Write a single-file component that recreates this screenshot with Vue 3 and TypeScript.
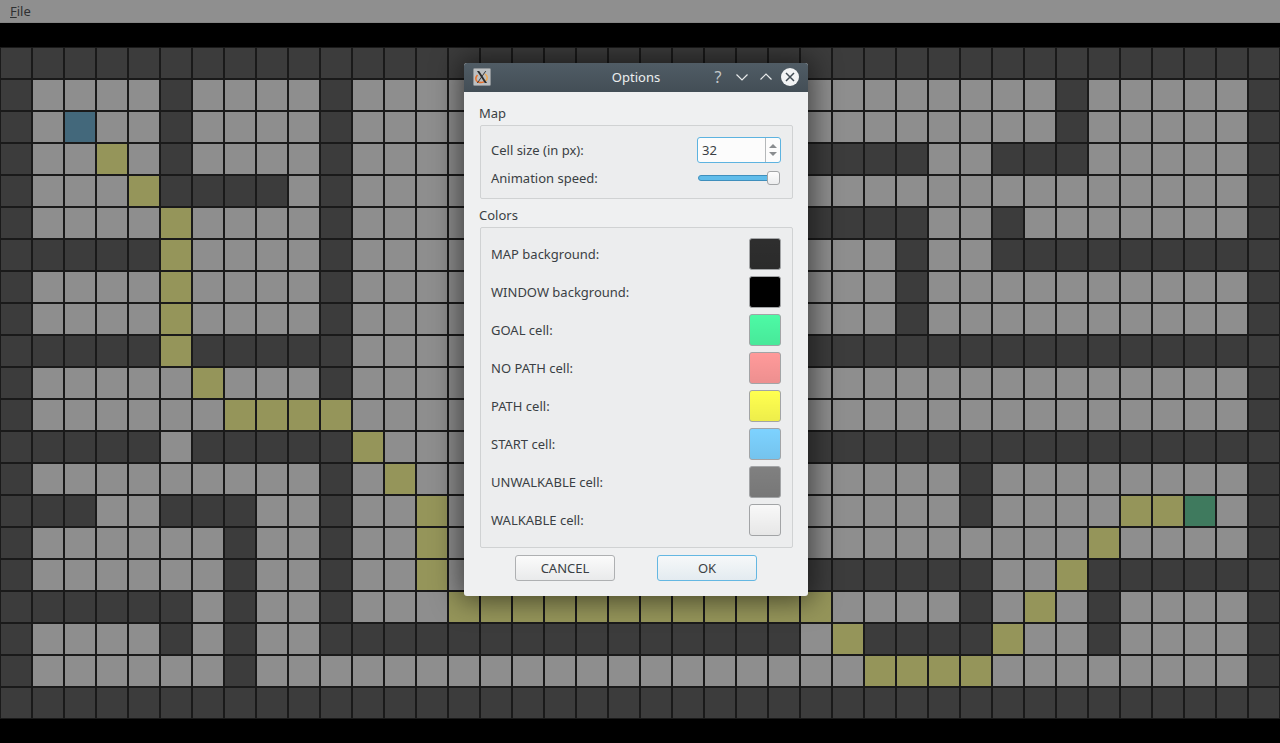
<script setup lang="ts">
import { computed } from 'vue';

const rows: string[] = [
  '##########' + '##########' + '##########' + '##########',
  '#....#....' + '#.........' + '..........' + '...#.....#',
  '#.s..#....' + '#.........' + '..........' + '...#.....#',
  '#..y.#....' + '#.........' + '.....####.' + '.###.....#',
  '#...y####.' + '#.........' + '..........' + '.........#',
  '#....y....' + '#.........' + '.....####.' + '.#.......#',
  '#####y....' + '#.........' + '........#.' + '.#########',
  '#....y....' + '#.........' + '........#.' + '.........#',
  '#....y....' + '#.........' + '........#.' + '.........#',
  '#####y####' + '#.........' + '.....#####' + '##########',
  '#.....y...' + '#.........' + '..........' + '.........#',
  '#......yyy' + 'y.........' + '..........' + '.........#',
  '#####.####' + '#y........' + '.....#####' + '##########',
  '#.........' + '#.y.......' + '..........' + '#........#',
  '###..###..' + '#..y......' + '..........' + '#....yyg.#',
  '#......#..' + '#..y......' + '..........' + '....y....#',
  '#......#..' + '#..y......' + '.....#####' + '#..y######',
  '######.#..' + '#...yyyyyy' + 'yyyyyy....' + '#.y.#....#',
  '#....#.#..' + '##########' + '#####.y###' + '#y..#....#',
  '#......#..' + '..........' + '.......yyy' + 'y........#',
  '##########' + '##########' + '##########' + '##########',
];

const kinds: Record<string, string> = {
  '#': 'wall',
  '.': 'free',
  y: 'path',
  s: 'start',
  g: 'goal',
};

const cells = computed(() => rows.join('').split('').map((c) => kinds[c]));

const colors = [
  { label: 'MAP background:', color: '#2e2e2e' },
  { label: 'WINDOW background:', color: '#000000' },
  { label: 'GOAL cell:', color: '#4dfaa5' },
  { label: 'NO PATH cell:', color: '#ff9a9a' },
  { label: 'PATH cell:', color: '#ffff50' },
  { label: 'START cell:', color: '#7dd2ff' },
  { label: 'UNWALKABLE cell:', color: '#808080' },
  { label: 'WALKABLE cell:', color: '#f8f8f8' },
];
</script>

<template>
  <div class="app">
    <div class="menubar"><span class="menu-item"><u>F</u>ile</span></div>
    <div class="map">
      <div v-for="(kind, i) in cells" :key="i" class="cell" :class="kind"></div>
    </div>

    <div class="dialog">
      <div class="titlebar">
        <svg class="app-icon" width="18" height="18" viewBox="0 0 18 18">
          <rect x="0.5" y="0.5" width="17" height="17" rx="1" fill="#bcbfc1" stroke="#8d9296" />
          <path d="M4.500 7C2 9.500 2.300 13 5 14C7.500 14.800 10.500 14.500 12.500 13" fill="none" stroke="#e8702a" stroke-width="1.500" />
          <path d="M12 6C14.800 8 15 11 12.500 13" fill="none" stroke="#f0a850" stroke-width="1.500" />
          <path d="M4 3h2.200l7.800 12h-2.200z" fill="#2c2c2c" />
          <path d="M13.200 3L4.800 15H3.900L12.300 3z" fill="#2c2c2c" />
        </svg>
        <span class="title">Options</span>
        <div class="title-buttons">
          <span class="help">?</span>
          <svg width="14" height="14" viewBox="0 0 14 14">
            <path d="M1.500 4.500L7 10l5.500-5.500" fill="none" stroke="#e8eaeb" stroke-width="1.200" />
          </svg>
          <svg width="14" height="14" viewBox="0 0 14 14">
            <path d="M1.500 9.500L7 4l5.500 5.500" fill="none" stroke="#e8eaeb" stroke-width="1.200" />
          </svg>
          <svg class="close" width="18" height="18" viewBox="0 0 18 18">
            <circle cx="9" cy="9" r="9" fill="#f2f3f4" />
            <path d="M5 5l8 8M13 5l-8 8" stroke="#414c54" stroke-width="1.500" />
          </svg>
        </div>
      </div>

      <div class="body">
        <div class="group-title">Map</div>
        <div class="group map-group">
          <div class="row spin-row">
            <span>Cell size (in px):</span>
            <div class="spinbox">
              <span class="spin-value">32</span>
              <div class="spin-arrows">
                <i class="arrow up"></i>
                <i class="arrow down"></i>
              </div>
            </div>
          </div>
          <div class="row slider-row">
            <span>Animation speed:</span>
            <div class="slider">
              <div class="track"></div>
              <div class="handle"></div>
            </div>
          </div>
        </div>

        <div class="group-title colors-title">Colors</div>
        <div class="group colors-group">
          <div v-for="c in colors" :key="c.label" class="row color-row">
            <span>{{ c.label }}</span>
            <div class="swatch" :style="{ backgroundColor: c.color }"></div>
          </div>
        </div>

        <div class="actions">
          <button class="btn">CANCEL</button>
          <button class="btn ok">OK</button>
        </div>
      </div>
    </div>
  </div>
</template>

<style scoped>
.app {
  position: relative;
  width: 1280px;
  height: 743px;
  background: #000;
  overflow: hidden;
  font-family: "Noto Sans", sans-serif;
  font-size: 13px;
  color: #3a3f44;
}

.menubar {
  height: 22px;
  background: #8f8f8f;
  border-bottom: 1px solid #858585;
  display: flex;
  align-items: center;
  padding-left: 10px;
  color: #2f3133;
  margin-bottom: 24px;
}

.map {
  display: grid;
  grid-template-columns: repeat(40, 32px);
  grid-auto-rows: 32px;
  background: #1a1a1a;
}

.cell {
  margin: 1px;
}

.wall {
  background: #3c3c3c;
}

.free {
  background: #8e8e8e;
}

.path {
  background: #95955a;
}

.start {
  background: #43687b;
}

.goal {
  background: #3f7a5e;
}

.dialog {
  position: absolute;
  left: 464px;
  top: 63px;
  width: 344px;
  height: 533px;
  background: #eff0f1;
  border-radius: 3px;
  box-shadow: 0 0 28px 4px rgba(0, 0, 0, 0.55);
  display: flex;
  flex-direction: column;
}

.titlebar {
  height: 29px;
  flex: none;
  background: linear-gradient(#505c65, #434e56);
  border-radius: 3px 3px 0 0;
  display: flex;
  align-items: center;
  padding: 0 9px 1px;
  box-sizing: border-box;
  position: relative;
}

.app-icon {
  flex: none;
}

.title {
  position: absolute;
  left: 0;
  right: 0;
  text-align: center;
  color: #eceeef;
  pointer-events: none;
}

.title-buttons {
  margin-left: auto;
  display: flex;
  align-items: center;
  gap: 10px;
  position: relative;
}

.close {
  margin-left: -2px;
}

.help {
  font-size: 16px;
  color: #c3c8cb;
  width: 14px;
  text-align: center;
  line-height: 18px;
}

.body {
  flex: 1;
  display: flex;
  flex-direction: column;
  padding: 12px 15px 0;
}

.group-title {
  line-height: 18px;
  height: 21px;
}

.colors-title {
  margin-top: 7px;
}

.group {
  margin-left: 1px;
  border: 1px solid #d0d2d3;
  border-radius: 2px;
  background: #ecedee;
  padding: 0 11px 0 10px;
}

.map-group {
  height: 74px;
  box-sizing: border-box;
  padding-top: 11px;
}

.row {
  display: flex;
  align-items: center;
  justify-content: space-between;
}

.spin-row {
  height: 26px;
}

.slider-row {
  height: 22px;
  margin-top: 4px;
}

.spinbox {
  width: 84px;
  height: 26px;
  box-sizing: border-box;
  border: 1px solid #5db3e0;
  border-radius: 3px;
  background: #fcfcfc;
  display: flex;
  align-items: center;
}

.spin-value {
  flex: 1;
  padding-left: 4px;
}

.spin-arrows {
  width: 14px;
  height: 100%;
  border-left: 1px solid #b5b8ba;
  display: flex;
  flex-direction: column;
  align-items: center;
  justify-content: center;
  gap: 4px;
}

.arrow {
  width: 0;
  height: 0;
  border-left: 4px solid transparent;
  border-right: 4px solid transparent;
}

.arrow.up {
  border-bottom: 4px solid #8a8d90;
}

.arrow.down {
  border-top: 4px solid #8a8d90;
}

.slider {
  position: relative;
  width: 82px;
  height: 14px;
  margin-right: 1px;
}

.track {
  position: absolute;
  left: 0;
  right: 4px;
  top: 4px;
  height: 6px;
  box-sizing: border-box;
  background: #5fbcea;
  border: 1px solid #3f8fbc;
  border-radius: 3px;
}

.handle {
  position: absolute;
  right: 0;
  top: 0;
  width: 13px;
  height: 14px;
  box-sizing: border-box;
  background: linear-gradient(#fdfdfd, #ecedee);
  border: 1px solid #a3a5a7;
  border-radius: 3px;
}

.colors-group {
  height: 321px;
  box-sizing: border-box;
  padding-top: 7px;
  display: flex;
  flex-direction: column;
}

.color-row {
  height: 38px;
  flex: none;
}

.swatch {
  width: 32px;
  height: 32px;
  box-sizing: border-box;
  border: 1px solid #a2a4a6;
  border-radius: 3px;
  background-image: linear-gradient(rgba(0, 0, 0, 0), rgba(0, 0, 0, 0.07));
}

.actions {
  display: flex;
  justify-content: center;
  gap: 42px;
  margin-top: 7px;
}

.btn {
  width: 100px;
  height: 26px;
  font: inherit;
  color: #3a3f44;
  background: linear-gradient(#fbfbfb, #e9eaeb);
  border: 1px solid #aeb0b2;
  border-radius: 3px;
  padding: 0;
}

.btn.ok {
  background: linear-gradient(#f6f8f9, #e3ebf0);
  border-color: #64b7e2;
}
</style>
